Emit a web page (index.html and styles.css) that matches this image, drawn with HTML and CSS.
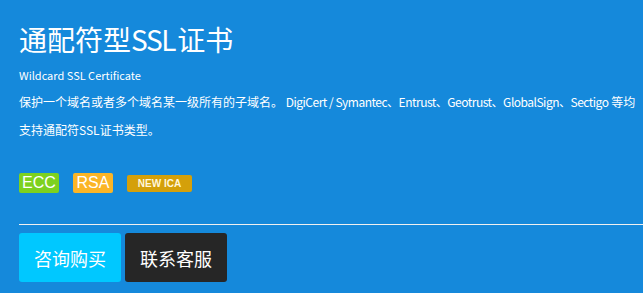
FILE: index.html
```html
<!DOCTYPE html>
<html lang="zh-CN">
<head>
    <meta charset="UTF-8">
    <meta name="viewport" content="width=device-width, initial-scale=1.0">
    <title>通配符型SSL证书</title>
    <link rel="stylesheet" href="styles.css">
</head>
<body>

    <div class="banner">
        <h1 class="titulo">通配符型<span class="latino">SSL</span>证书</h1>
        <p class="subtitulo">Wildcard SSL Certificate</p>
        <p class="descricao">保护一个域名或者多个域名某一级所有的子域名。 <span class="latino">DigiCert / Symantec、Entrust、Geotrust、GlobalSign、Sectigo</span> 等均<br>支持通配符SSL证书类型。</p>

        <div class="tags">
            <span class="tag tag-ecc">ECC</span>
            <span class="tag tag-rsa">RSA</span>
            <span class="tag tag-ica">NEW ICA</span>
        </div>

        <hr class="linha">

        <div class="botoes">
            <a class="botao botao-comprar">咨询购买</a>
            <a class="botao botao-contato">联系客服</a>
        </div>
    </div>

</body>
</html>
```

FILE: styles.css
```css
body {
    margin: 0;
    padding: 0;
    background-color: #1589db;
    color: white;
    font-family: "Noto Sans CJK SC", sans-serif;
}

.banner {
    padding: 20px 0 0 19px;
}

.titulo {
    font-size: 28px;
    font-weight: normal;
    line-height: 38px;
    margin: 0;
}

.titulo .latino {
    letter-spacing: -1.3px;
    margin-right: 2px;
}

.subtitulo {
    font-size: 11px;
    margin: 9px 0 0;
    line-height: 16px;
}

.descricao {
    font-size: 12px;
    line-height: 28px;
    margin: 5px 0 0;
    white-space: nowrap;
}

.descricao .latino {
    letter-spacing: -0.5px;
}

.tags {
    display: flex;
    align-items: center;
    margin-top: 29px;
    height: 20px;
}

.tag {
    display: inline-flex;
    align-items: center;
    justify-content: center;
    border-radius: 2px;
    font-family: "Liberation Sans", Arial, sans-serif;
}

.tag-ecc {
    background-color: #7dd11f;
    width: 40px;
    height: 20px;
    font-size: 16px;
    margin-right: 14px;
}

.tag-rsa {
    background-color: #fbb526;
    width: 40px;
    height: 20px;
    font-size: 16px;
    margin-right: 14px;
}

.tag-ica {
    background-color: #d4a00a;
    width: 65px;
    height: 17px;
    font-size: 10px;
    font-weight: bold;
    color: #fff7dc;
}

.linha {
    border: none;
    border-top: 1px solid #f0f0f0;
    margin: 31px 0 0;
    height: 0;
}

.botoes {
    display: flex;
    gap: 4px;
    margin-top: 8px;
}

.botao {
    display: flex;
    align-items: center;
    justify-content: center;
    width: 102px;
    height: 49px;
    border-radius: 3px;
    font-size: 18px;
    cursor: pointer;
}

.botao-comprar {
    background-color: #00c8ff;
}

.botao-contato {
    background-color: #262626;
}
```
